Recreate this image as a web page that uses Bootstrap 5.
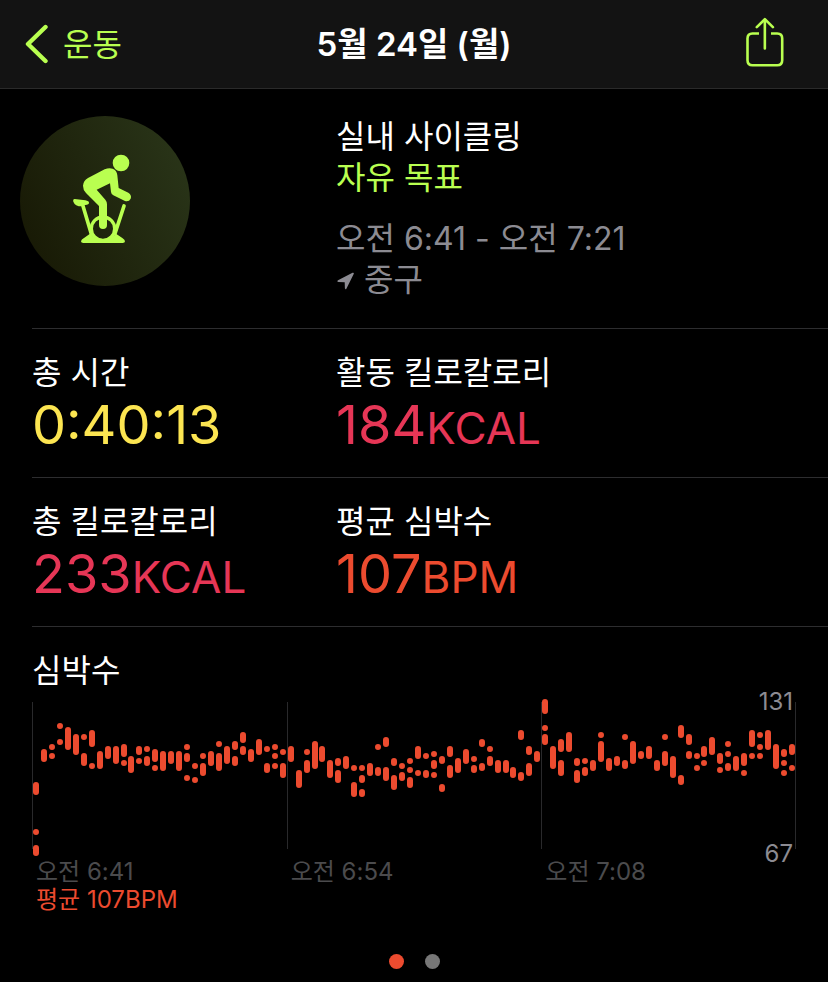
<!DOCTYPE html>
<html lang="ko">
<head>
<meta charset="utf-8">
<meta name="viewport" content="width=device-width, initial-scale=1">
<title>실내 사이클링</title>
<link href="https://cdn.jsdelivr.net/npm/bootstrap@5.3.0/dist/css/bootstrap.min.css" rel="stylesheet">
<style>
  :root { --lime: #b9ff50; --heart: #ec4b2f; --energy: #e63656; --time: #fce551; --rule: #2d2d2f; --muted: #8c8b92; }
  body { background: #000; color: #fff; font-family: Inter, "Noto Sans CJK KR", sans-serif; font-size: 32px; line-height: 41px; font-weight: 400; }
  .topbar { background: #131313; border-bottom: 1px solid #2a2a2a; height: 89px; }
  .topbar h1 { font-size: 33px; line-height: 41px; font-weight: 600; }
  .side { flex: 1 1 0; }
  .back { gap: 15px; margin-left: 24px; }
  .share { margin-right: 43px; }
  .lime { color: var(--lime); }
  .muted { color: var(--muted); }
  .time { color: var(--time); }
  .energy { color: var(--energy); }
  .heart { color: var(--heart); }
  .ruled { margin-left: 32px; border-bottom: 1px solid var(--rule); }
  .first-col { flex: 0 0 38.2%; }
  .summary { padding: 27px 0 28px; }
  .workout-badge { width: 170px; height: 170px; margin-left: -12px; background: linear-gradient(65deg, #171804 5%, #293418 90%); }
  .metrics { padding: 23px 0 20px; }
  .label { font-size: 32px; line-height: 41px; font-weight: 400; }
  .reading { font-size: 54px; line-height: 64px; font-weight: 400; }
  .unit { font-size: 44px; line-height: 1; }
  .chart-section { padding: 23px 32px 0; }
  .plot { margin-top: 7px; margin-bottom: 2px; }
  .scale { position: absolute; right: 3px; font-size: 24px; line-height: 28px; }
  .scale-max { top: -10px; }
  .scale-min { bottom: -12px; }
  .axis { font-size: 24px; line-height: 28px; }
  .axis span { flex: 1 1 0; padding-left: 4px; color: #4b4b4d; }
  .pager { padding: 40px 0 13px; gap: 21px; }
  .pager button { width: 15px; height: 15px; background: #777; }
  .pager button.current { background: var(--heart); }
</style>
<script src="https://cdn.jsdelivr.net/npm/bootstrap@5.3.0/dist/js/bootstrap.bundle.min.js"></script>
</head>
<body>
<header class="topbar d-flex align-items-center">
  <div class="side d-flex">
    <a href="#" class="back lime text-decoration-none d-flex align-items-center">
      <svg width="24" height="40" viewBox="0 0 24 40" fill="none" stroke="currentColor" stroke-width="4.4" stroke-linecap="round" stroke-linejoin="round" aria-hidden="true"><path d="M21.5 3 4 20 21.5 37"/></svg>운동</a>
  </div>
  <h1 class="m-0 text-nowrap">5월 24일 (월)</h1>
  <div class="side d-flex justify-content-end">
    <button type="button" class="share btn p-0 border-0 lime" aria-label="공유">
      <svg class="d-block" width="40" height="54" viewBox="0 0 40 54" fill="none" stroke="currentColor" stroke-width="2.6" stroke-linecap="round" stroke-linejoin="round" aria-hidden="true"><path stroke-linecap="butt" d="M14 16.5H7.500Q2.500 16.500 2.500 21.500V43.200Q2.500 48.200 7.500 48.200H32.200Q37.200 48.200 37.200 43.200V21.500Q37.200 16.500 32.200 16.500H26"/><path d="M19.850 31.500V2.500M11.800 10.200 19.850 2.200 27.900 10.200"/></svg>
    </button>
  </div>
</header>

<main>
  <section class="ruled summary d-flex">
    <div class="first-col">
      <div class="workout-badge rounded-circle d-flex align-items-center justify-content-center lime">
        <svg width="90" height="120" viewBox="0 3 270 360" aria-hidden="true">
          <g fill="currentColor">
            <circle cx="183" cy="69" r="25"/>
            <path d="M84 114 134 88Q147 82 158 86 171 91 172 106L176 144 205 158Q216 165 212 176 207 186 195 183L160 166Q154 163 153 156L150 130 110 149 136 179Q141 185 141 193V255A12 12 0 0 1 117 255V198L78 159Q69 150 69 137 70 122 84 114Z"/>
            <path d="M44 177 76 181Q87 183 87 188 87 194 76 195L65 199Q45 199 40 185 38 177 44 177Z"/>
            <path d="M63 304Q64 298 72 294L90 281Q104 297 129 297 153 297 168 281L187 294Q195 299 195 304 195 309 188 309H70Q63 309 63 304Z"/>
          </g>
          <g fill="none" stroke="currentColor" stroke-linecap="round"><circle cx="129" cy="266" r="35" stroke-width="10"/><path stroke-width="11" d="M69 198 94 282M192 198 165 280"/></g>
        </svg>
      </div>
    </div>
    <div>
      <div>실내 사이클링</div>
      <div class="lime">자유 목표</div>
      <div class="muted mt-3 pt-1">오전 6:41 - 오전 7:21</div>
      <div class="muted d-flex align-items-center gap-2">
        <svg width="20" height="20" viewBox="0 0 20 20" fill="currentColor" aria-hidden="true"><path d="M2 10.300 16.500 2.800Q18.300 2.200 17.700 4L10.500 18.500Q9.500 20.300 8.900 18.300L8.700 12.300 2.500 12Q.5 11.400 2 10.300Z"/></svg>중구</div>
    </div>
  </section>

  <section class="ruled metrics d-flex">
    <div class="first-col">
      <h2 class="label m-0">총 시간</h2>
      <div class="reading time">0:40:13</div>
    </div>
    <div>
      <h2 class="label m-0">활동 킬로칼로리</h2>
      <div class="reading energy">184<span class="unit">KCAL</span></div>
    </div>
  </section>

  <section class="ruled metrics d-flex">
    <div class="first-col">
      <h2 class="label m-0">총 킬로칼로리</h2>
      <div class="reading energy">233<span class="unit">KCAL</span></div>
    </div>
    <div>
      <h2 class="label m-0">평균 심박수</h2>
      <div class="reading heart">107<span class="unit">BPM</span></div>
    </div>
  </section>

  <section class="chart-section">
    <h2 class="label m-0">심박수</h2>
    <div class="plot position-relative">
      <svg class="d-block w-100" viewBox="0 8 764 158" role="img" aria-label="심박수 그래프">
        <path d="M.5 12V159M255.500 12V159M509.500 12V159M763.500 12V159" stroke="#29292b" stroke-width="1"/>
        <path id="beats" fill="none" stroke="#ec4b2f" stroke-width="6" stroke-linecap="round"/>
      </svg>
      <span class="scale scale-max muted">131</span>
      <span class="scale scale-min muted">67</span>
    </div>
    <div class="axis d-flex"><span>오전 6:41</span><span>오전 6:54</span><span>오전 7:08</span></div>
    <div class="axis heart ps-1">평균 107BPM</div>
  </section>
  <nav class="pager d-flex justify-content-center" aria-label="페이지">
    <button type="button" class="current rounded-circle border-0 p-0" aria-label="1"></button>
    <button type="button" class="rounded-circle border-0 p-0" aria-label="2"></button>
  </nav>
</main>
<script>
  // One entry per time slot; each range is top-bottom, a single number is one sample.
  const slots = `92-105 142 155-166,59-72,57 66,36 52,37-60,44-65,47 63-76,40-57 76,61-79,56-69,56-74,54-67 73,66-83,56-65 71,59 66-76,59-72 78,
61-81,61-74,61-81,57 63-72 88,76 90,66 73-86,61-76,54 63-81,56-74,51-60 66-76,42-53 56-65,59-72,49-65,59 73-83,57 66 76,62 73-88,
56-72,80-98,62 70-83,51-79,56-72,70-88,68-76 80-93,66-79,78 92-107,78 85-93 99-107,73-86,57 77-86,47-57 77-91,68-76 85-100,76 82-91,71 80 87-98,
56-69 83,66 80-88,64 70-79 85,66-74 94-102,56-67 75-88,68-83,59-74,69 75-83,49-57 73-81,59 66-76,70-83,70-83,77-88,40-50 82-91,56-65 73-86,61-72,
9-24 38 44-55,56-79,49-62 70-86,42-62,68-76 80-93,71 77-86,70-81,45 51-72,68-81,66-76,47 70-79,51-74,61-69,56-69,70-81,47 61-76,
66-88,35-48 85-95,44-55 61-69,66 78,56-67 73,47-65,63-74 80,54 64 73-81,66-81,63-76 83,40-57 66,45 57 66,40-60,54-79,59-67 73 83,54-65 78`;
  const step = 756 / 95;
  document.getElementById('beats').setAttribute('d', slots.split(',').map((slot, i) =>
    slot.trim().split(' ').map(range => {
      const [top, bottom] = range.split('-').map(Number);
      const from = bottom ? top + 3 : top;
      return `M${4 + Math.round(i * step)} ${from}V${bottom ? bottom - 3 : top + 0.01}`;
    }).join('')).join(''));
</script>
</body>
</html>
